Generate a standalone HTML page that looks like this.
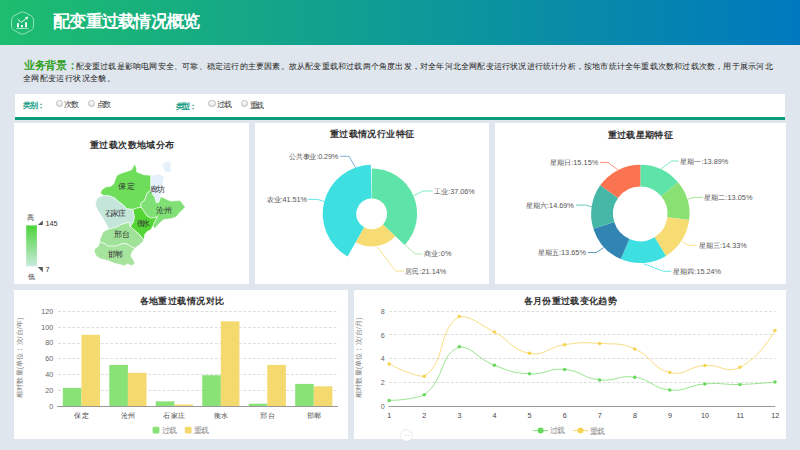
<!DOCTYPE html>
<html><head><meta charset="utf-8">
<style>
*{margin:0;padding:0;box-sizing:border-box}
html,body{width:800px;height:450px;overflow:hidden}
body{background:#e0e6ed;font-family:"Liberation Sans",sans-serif;position:relative;color:#333}
.abs{position:absolute;white-space:nowrap}
#hdr{left:0;top:0;width:800px;height:45px;background:linear-gradient(90deg,#1dbd6e 0%,#0078be 100%)}
#title{left:52.5px;top:11px;font-size:16.9px;font-weight:bold;color:#fff;line-height:20px}
#bgl{font-size:10.5px;line-height:13px;color:#3aa51f;font-weight:bold}
.bgt{font-size:8.4px;line-height:12px;color:#333}
#bar{left:15px;top:94px;width:770px;height:26px;background:#fff;border-bottom:3px solid #0a9e7e}
.flab{font-size:8.2px;font-weight:bold;color:#1d9d88;top:100.5px;line-height:10px}
.radio{width:7.2px;height:7.2px;border-radius:50%;border:1px solid #b8b8b8;background:linear-gradient(#fff,#e4e4e4);top:100px}
.rtx{font-size:7.3px;color:#444;top:100.8px;line-height:9px}
.pnl{background:#fff}
</style></head><body>
<div id="hdr" class="abs"></div>
<svg class="abs" style="left:0;top:0" width="45" height="45" viewBox="0 0 45 45">
 <path d="M20.13 12.55Q22.55 11.25 24.97 12.55L31.12 15.85Q33.54 17.15 33.54 19.75L33.54 26.35Q33.54 28.95 31.12 30.25L24.97 33.55Q22.55 34.85 20.13 33.55L13.98 30.25Q11.56 28.95 11.56 26.35L11.56 19.75Q11.56 17.15 13.98 15.85Z" fill="none" stroke="#d8f5e6" stroke-width="0.75" opacity="0.85"/>
 <rect x="17" y="23.1" width="1.9" height="4.2" fill="#fff"/>
 <rect x="21" y="25" width="1.9" height="2.3" fill="#fff"/>
 <rect x="25.1" y="22.3" width="1.9" height="5" fill="#fff"/>
 <rect x="16.2" y="28.2" width="12.3" height="0.6" fill="#fff"/>
 <path d="M17.8 19.3 L21.3 22.4 L26.6 18.3" fill="none" stroke="#fff" stroke-width="0.9"/>
 <path d="M28.1 16.6 L24.9 17.5 L27.3 19.8 Z" fill="#fff"/>
</svg>
<div id="bar" class="abs"></div>
<div class="abs radio" style="left:55.8px"></div>
<div class="abs radio" style="left:88.1px"></div>
<div class="abs radio" style="left:208.4px"></div>
<div class="abs radio" style="left:240.9px"></div>

<div class="abs pnl" style="left:14px;top:123px;width:235px;height:161px"></div>
<div class="abs pnl" style="left:255px;top:123px;width:234px;height:161px"></div>
<div class="abs pnl" style="left:495px;top:123px;width:291px;height:161px"></div>
<div class="abs pnl" style="left:14px;top:290px;width:334px;height:149px"></div>
<div class="abs pnl" style="left:354px;top:290px;width:432px;height:149px"></div>

<svg class="abs" style="left:0;top:0" width="800" height="450" viewBox="0 0 800 450" font-family="Liberation Sans, sans-serif">
<!-- MAP -->
<path d="M134.6 164.3L136.3 167.5L136.8 172L143.6 174.7L150.9 175.3L150.9 190.6L147.2 193L144.4 200.6L140.6 203.3L141.1 207.2L136.1 208.3L132.8 209.4L126.7 208.9L123.6 205.2L119.3 202.2L114.4 197.9L109.6 196L103.4 195.5L100.4 193L101.6 190L105.9 186.9L110.8 186.3L113.8 183.8L115 180.2L116.9 175.3L122.4 172.8L126.7 171.6L131.6 169.8Z" fill="#6ede5a" stroke="#fff" stroke-width="0.6" stroke-linejoin="round"/>
<path d="M150.9 175.3L155 175L159.5 174L164.3 177L162.5 184L161.3 190.6L160.7 196.7L158.8 202.2L156.4 202.8L154.6 196.7L153.3 195.5L150.9 190.6Z" fill="#e6f0fa" stroke="#fff" stroke-width="0.6" stroke-linejoin="round"/>
<path d="M162.5 163L167 161.5L170.5 161L171 166L171 172L166 172.5L163 168Z" fill="#e6f0fa" stroke="#fff" stroke-width="0.6" stroke-linejoin="round"/>
<path d="M147.2 193L150.9 190.6L153.3 195.5L154.6 196.7L156.4 202.8L158.8 202.2L160.7 196.7L162.6 197.4L170.6 201.1L180.3 200.5L185.2 207.2L179.1 213.3L176.1 217L170.6 218.8L163.8 219.4L159.6 223.1L154.7 228.6L152.8 226.1L155 221.1L157.2 216.7L151.7 218.3L147.2 216.1L143.3 210.6L141.1 207.2L140.6 203.3L144.4 200.6Z" fill="#80e076" stroke="#fff" stroke-width="0.6" stroke-linejoin="round"/>
<path d="M132.8 209.4L136.1 208.3L141.1 207.2L143.3 210.6L147.2 216.1L151.7 218.3L157.2 216.7L155 221.1L152.8 226.1L150.6 230L147.8 231.1L145 233.9L143.8 240L139.4 234.4L136.1 231.7L131.1 227.2L130 226.7L132.8 222.8L134.4 217.2Z" fill="#55d637" stroke="#fff" stroke-width="0.6" stroke-linejoin="round"/>
<path d="M96.7 199L99.5 197L103.4 195.5L109.6 196L114.4 197.9L119.3 202.2L123.6 205.2L126.7 208.9L132.8 209.4L134.4 217.2L132.8 222.8L130 226.7L129.3 222.3L122 224.3L116.7 227L108.7 229L106 223.7L102.7 217.7L98 211L95.3 205Z" fill="#c4e6da" stroke="#fff" stroke-width="0.6" stroke-linejoin="round"/>
<path d="M108.7 229L116.7 227L122 224.3L129.3 222.3L130 226.7L131.1 227.2L136.1 231.7L139.4 234.4L143.8 240L140.7 243.9L134.9 248.3L130.9 246.6L128.2 244.3L122.9 243.4L115.8 246.1L107.8 246.1L104.2 243.4L99.8 242.1L100 239L103.3 231.7Z" fill="#a0e298" stroke="#fff" stroke-width="0.6" stroke-linejoin="round"/>
<path d="M99.8 242.1L104.2 243.4L107.8 246.1L115.8 246.1L122.9 243.4L128.2 244.3L130.9 246.6L134.9 248.3L131.8 252.3L130.9 256.3L134 260.8L134.9 263.4L131.8 265.7L127.3 263.9L124.7 265.7L114.9 263.4L106.9 260.3L99.8 258.6L96.2 255.9L94.4 251.9L94.4 249.2L98.4 246.1Z" fill="#a6e49e" stroke="#fff" stroke-width="0.6" stroke-linejoin="round"/>
<defs><linearGradient id="vm" x1="0" y1="0" x2="0" y2="1"><stop offset="0" stop-color="#4cd43a"/><stop offset="1" stop-color="#c8eadc"/></linearGradient></defs>
<rect x="26.2" y="225.4" width="10.7" height="40.9" fill="url(#vm)"/>
<path d="M42.8 220.6 L42.8 224.9 L37.8 224.9 Z" fill="#555"/>
<path d="M37.8 266.9 L42.8 266.9 L42.8 272.2 Z" fill="#555"/>
<!-- ROSE -->
<path d="M371.7 168.39A45.41 45.41 0 0 1 404.68 245.01L382.96 224.45A15.5 15.5 0 0 0 371.7 198.3Z" fill="#5ee3a9"/>
<path d="M395.35 236.18A32.56 32.56 0 0 1 355.66 242.13L364.06 227.29A15.5 15.5 0 0 0 382.96 224.45Z" fill="#f6dc72"/>
<path d="M347.56 256.44A49 49 0 0 1 370.81 164.81L371.42 198.3A15.5 15.5 0 0 0 364.06 227.29Z" fill="#3ddfe0"/>
<path d="M371.41 198.07A15.73 15.73 0 0 1 371.7 198.07L371.7 198.3A15.5 15.5 0 0 0 371.42 198.3Z" fill="#5a9ccc"/>
<g fill="none" stroke-width="0.8">
 <path d="M414 195.5 L423 191 L432.5 191" stroke="#5ee3a9"/>
 <path d="M404.4 244.4 L415 253.9 L422.8 253.9" stroke="#9fe89a"/>
 <path d="M377.2 246.7 L395.6 271.1 L403.9 271.1" stroke="#f6dc72"/>
 <path d="M323.9 201.4 L317.7 199.4 L308.1 199.4" stroke="#3ddfe0"/>
 <path d="M355.7 167.7 L349 156.3 L340.3 156.3" stroke="#5a9ccc"/>
</g>
<!-- DONUT -->
<path d="M640.3 164.7A49.2 49.2 0 0 1 677.99 182.28L661.21 196.35A27.3 27.3 0 0 0 640.3 186.6Z" fill="#5ee3a9"/>
<path d="M677.99 182.28A49.2 49.2 0 0 1 689.13 219.88L667.4 217.22A27.3 27.3 0 0 0 661.21 196.35Z" fill="#8ae173"/>
<path d="M689.13 219.88A49.2 49.2 0 0 1 665.95 255.88L654.53 237.19A27.3 27.3 0 0 0 667.4 217.22Z" fill="#f6dc72"/>
<path d="M665.95 255.88A49.2 49.2 0 0 1 620.73 259.04L629.44 238.95A27.3 27.3 0 0 0 654.53 237.19Z" fill="#3ddfe0"/>
<path d="M620.73 259.04A49.2 49.2 0 0 1 593.36 228.63L614.25 222.07A27.3 27.3 0 0 0 629.44 238.95Z" fill="#3285b3"/>
<path d="M593.36 228.63A49.2 49.2 0 0 1 600.23 185.36L618.06 198.06A27.3 27.3 0 0 0 614.25 222.07Z" fill="#45b7a6"/>
<path d="M600.23 185.36A49.2 49.2 0 0 1 640.3 164.7L640.3 186.6A27.3 27.3 0 0 0 618.06 198.06Z" fill="#fb7452"/>
<g fill="none" stroke-width="0.8">
 <path d="M660.9 169 L671.6 161 L678.7 161" stroke="#5ee3a9"/>
 <path d="M688.4 199.2 L693.8 197.4 L702.7 197.4" stroke="#8ae173"/>
 <path d="M682.2 241.7 L688.9 245.4 L696.7 245.4" stroke="#f6dc72"/>
 <path d="M643.8 263.8 L663.8 271.3 L671.3 271.3" stroke="#3ddfe0"/>
 <path d="M603.8 247.5 L596.3 252.5 L588 252.5" stroke="#3285b3"/>
 <path d="M592.1 206.9 L585.8 205.1 L576 205.1" stroke="#45b7a6"/>
 <path d="M617.9 169.9 L608.1 162.4 L600.1 162.4" stroke="#fb7452"/>
</g>
<!-- BAR -->
<line x1="58.2" y1="390.5" x2="337.0" y2="390.5" stroke="#dcdcdc" stroke-width="1" stroke-dasharray="2.7 2.05"/>
<line x1="58.2" y1="374.5" x2="337.0" y2="374.5" stroke="#dcdcdc" stroke-width="1" stroke-dasharray="2.7 2.05"/>
<line x1="58.2" y1="358.5" x2="337.0" y2="358.5" stroke="#dcdcdc" stroke-width="1" stroke-dasharray="2.7 2.05"/>
<line x1="58.2" y1="343.5" x2="337.0" y2="343.5" stroke="#dcdcdc" stroke-width="1" stroke-dasharray="2.7 2.05"/>
<line x1="58.2" y1="327.5" x2="337.0" y2="327.5" stroke="#dcdcdc" stroke-width="1" stroke-dasharray="2.7 2.05"/>
<line x1="58.2" y1="311.5" x2="337.0" y2="311.5" stroke="#dcdcdc" stroke-width="1" stroke-dasharray="2.7 2.05"/>
<rect x="62.85" y="387.89" width="18.59" height="18.21" fill="#89e276"/>
<rect x="81.43" y="334.85" width="18.59" height="71.25" fill="#f4d96e"/>
<rect x="109.31" y="364.93" width="18.59" height="41.17" fill="#89e276"/>
<rect x="127.9" y="372.85" width="18.59" height="33.25" fill="#f4d96e"/>
<rect x="155.78" y="401.35" width="18.59" height="4.75" fill="#89e276"/>
<rect x="174.37" y="404.52" width="18.59" height="1.58" fill="#f4d96e"/>
<rect x="202.25" y="375.22" width="18.59" height="30.88" fill="#89e276"/>
<rect x="220.83" y="321.39" width="18.59" height="84.71" fill="#f4d96e"/>
<rect x="248.71" y="403.72" width="18.59" height="2.38" fill="#89e276"/>
<rect x="267.3" y="364.93" width="18.59" height="41.17" fill="#f4d96e"/>
<rect x="295.18" y="383.93" width="18.59" height="22.17" fill="#89e276"/>
<rect x="313.77" y="386.31" width="18.59" height="19.79" fill="#f4d96e"/>
<line x1="57.2" y1="406.5" x2="338.0" y2="406.5" stroke="#999" stroke-width="1"/>
<g font-size="7.2" fill="#666" text-anchor="end">
<text x="53.2" y="408.7">0</text>
<text x="53.2" y="392.87">20</text>
<text x="53.2" y="377.03">40</text>
<text x="53.2" y="361.2">60</text>
<text x="53.2" y="345.36">80</text>
<text x="53.2" y="329.53">100</text>
<text x="53.2" y="313.7">120</text>
</g><g font-size="7.2" fill="#444" text-anchor="middle">
<text x="81.43" y="418.2" textLength="14.5" lengthAdjust="spacing">保定</text>
<text x="127.9" y="418.2" textLength="14.5" lengthAdjust="spacing">沧州</text>
<text x="174.37" y="418.2" textLength="22.1" lengthAdjust="spacing">石家庄</text>
<text x="220.83" y="418.2" textLength="14.5" lengthAdjust="spacing">衡水</text>
<text x="267.3" y="418.2" textLength="14.5" lengthAdjust="spacing">邢台</text>
<text x="313.77" y="418.2" textLength="14.5" lengthAdjust="spacing">邯郸</text>
</g>
<text transform="translate(22,357.8) rotate(-90)" font-size="6.6" fill="#777" text-anchor="middle" textLength="80.5" lengthAdjust="spacing">相对数量(单位：次/台/年)</text>
<rect x="152.6" y="426.7" width="6.8" height="6.8" rx="1.5" fill="#89e276"/>
<rect x="184.8" y="426.7" width="6.8" height="6.8" rx="1.5" fill="#f4d96e"/>
<!-- LINE -->
<line x1="389.2" y1="382.5" x2="775.3" y2="382.5" stroke="#dcdcdc" stroke-width="1" stroke-dasharray="2.7 2.05"/>
<line x1="389.2" y1="358.5" x2="775.3" y2="358.5" stroke="#dcdcdc" stroke-width="1" stroke-dasharray="2.7 2.05"/>
<line x1="389.2" y1="334.5" x2="775.3" y2="334.5" stroke="#dcdcdc" stroke-width="1" stroke-dasharray="2.7 2.05"/>
<line x1="389.2" y1="311.5" x2="775.3" y2="311.5" stroke="#dcdcdc" stroke-width="1" stroke-dasharray="2.7 2.05"/>
<line x1="388.5" y1="406.5" x2="775.3" y2="406.5" stroke="#999" stroke-width="1"/>
<g font-size="7.2" fill="#666" text-anchor="end">
<text x="384.7" y="408.7">0</text>
<text x="384.7" y="385">2</text>
<text x="384.7" y="361.3">4</text>
<text x="384.7" y="337.6">6</text>
<text x="384.7" y="313.9">8</text>
</g><g font-size="7.2" fill="#444" text-anchor="middle">
<text x="389.2" y="417.6">1</text>
<text x="424.3" y="417.6">2</text>
<text x="459.4" y="417.6">3</text>
<text x="494.5" y="417.6">4</text>
<text x="529.6" y="417.6">5</text>
<text x="564.7" y="417.6">6</text>
<text x="599.8" y="417.6">7</text>
<text x="634.9" y="417.6">8</text>
<text x="670" y="417.6">9</text>
<text x="705.1" y="417.6">10</text>
<text x="740.2" y="417.6">11</text>
<text x="775.3" y="417.6">12</text>
</g>
<text transform="translate(361.2,357.8) rotate(-90)" font-size="6.6" fill="#777" text-anchor="middle" textLength="80.5" lengthAdjust="spacing">相对数量(单位：次/台/月)</text>
<path d="M389.2 363.91C389.2 363.91 412.04 376.36 424.27 376.36C447.11 360.89 436.76 330.67 459.34 316.4C471.83 316.4 477.45 323.12 494.41 332.04C512.52 341.55 510.83 349.88 529.48 353.25C545.9 356.22 546.77 347.21 564.55 344.72C581.84 342.29 582.19 342.35 599.62 343.41C617.26 344.49 618.66 342.35 634.69 348.98C653.73 356.87 650.78 367.99 669.76 372.45C685.85 376.22 687.14 366.74 704.83 365.45C722.21 364.19 725.56 374.47 739.9 367.35C760.63 357.05 774.97 330.62 774.97 330.62" fill="none" stroke="#f6d66a" stroke-width="0.85"/>
<path d="M389.2 400.41C389.2 400.41 411.15 400.41 424.27 394.84C446.22 378.08 438.29 355.74 459.34 346.85C473.36 346.85 476.07 358.18 494.41 365.22C511.14 371.63 511.76 372.67 529.48 373.75C546.83 374.8 547.32 367.97 564.55 369.48C582.39 371.05 581.74 377.95 599.62 379.91C616.81 381.8 617.68 374.74 634.69 377.19C652.75 379.78 651.81 388.25 669.76 389.98C686.88 391.63 687.17 385.34 704.83 383.94C722.24 382.56 722.38 384.89 739.9 384.41C757.45 383.94 774.97 382.04 774.97 382.04" fill="none" stroke="#86e07a" stroke-width="0.85"/>
<circle cx="389.2" cy="363.91" r="1.75" fill="#f5d452"/>
<circle cx="424.27" cy="376.36" r="1.75" fill="#f5d452"/>
<circle cx="459.34" cy="316.4" r="1.75" fill="#f5d452"/>
<circle cx="494.41" cy="332.04" r="1.75" fill="#f5d452"/>
<circle cx="529.48" cy="353.25" r="1.75" fill="#f5d452"/>
<circle cx="564.55" cy="344.72" r="1.75" fill="#f5d452"/>
<circle cx="599.62" cy="343.41" r="1.75" fill="#f5d452"/>
<circle cx="634.69" cy="348.98" r="1.75" fill="#f5d452"/>
<circle cx="669.76" cy="372.45" r="1.75" fill="#f5d452"/>
<circle cx="704.83" cy="365.45" r="1.75" fill="#f5d452"/>
<circle cx="739.9" cy="367.35" r="1.75" fill="#f5d452"/>
<circle cx="774.97" cy="330.62" r="1.75" fill="#f5d452"/>
<circle cx="389.2" cy="400.41" r="1.75" fill="#6ad85e"/>
<circle cx="424.27" cy="394.84" r="1.75" fill="#6ad85e"/>
<circle cx="459.34" cy="346.85" r="1.75" fill="#6ad85e"/>
<circle cx="494.41" cy="365.22" r="1.75" fill="#6ad85e"/>
<circle cx="529.48" cy="373.75" r="1.75" fill="#6ad85e"/>
<circle cx="564.55" cy="369.48" r="1.75" fill="#6ad85e"/>
<circle cx="599.62" cy="379.91" r="1.75" fill="#6ad85e"/>
<circle cx="634.69" cy="377.19" r="1.75" fill="#6ad85e"/>
<circle cx="669.76" cy="389.98" r="1.75" fill="#6ad85e"/>
<circle cx="704.83" cy="383.94" r="1.75" fill="#6ad85e"/>
<circle cx="739.9" cy="384.41" r="1.75" fill="#6ad85e"/>
<circle cx="774.97" cy="382.04" r="1.75" fill="#6ad85e"/>
<line x1="533.1" y1="430.6" x2="548.2" y2="430.6" stroke="#86e07a" stroke-width="1"/><circle cx="540.6" cy="430.6" r="3" fill="#6ad85e"/>
<line x1="573" y1="430.6" x2="588.1" y2="430.6" stroke="#f6d66a" stroke-width="1"/><circle cx="580.5" cy="430.6" r="3" fill="#f5d452"/>
<circle cx="406.5" cy="435.5" r="5.8" fill="#fff" stroke="#e4e4e4" stroke-width="0.8"/>
<g fill="#ccc"><circle cx="404.3" cy="435.5" r="0.5"/><circle cx="406.5" cy="435.5" r="0.5"/><circle cx="408.7" cy="435.5" r="0.5"/></g>
<!-- TEXT -->
<text x="52.95" y="27.40" font-size="17" font-weight="bold" fill="#fff" textLength="147.47" lengthAdjust="spacing">配变重过载情况概览</text>
<text x="23.83" y="69.15" font-size="10.5" font-weight="bold" fill="#2f9f1c" textLength="54.05" lengthAdjust="spacing">业务背景：</text>
<text x="75.53" y="68.86" font-size="8.4" fill="#222" textLength="696.98" lengthAdjust="spacing">配变重过载是影响电网安全、可靠、稳定运行的主要因素。故从配变重载和过载两个角度出发，对全年河北全网配变运行状况进行统计分析，按地市统计全年重载次数和过载次数，用于展示河北</text>
<text x="22.94" y="81.42" font-size="8.4" fill="#222" textLength="91.80" lengthAdjust="spacing">全网配变运行状况全貌。</text>
<text x="23.11" y="108.34" font-size="8.2" font-weight="bold" fill="#139b84" textLength="21.54" lengthAdjust="spacing">类别：</text>
<text x="64.34" y="107.21" font-size="7.5" fill="#333" textLength="14.41" lengthAdjust="spacing">次数</text>
<text x="97.12" y="107.45" font-size="7.5" fill="#333" textLength="14.25" lengthAdjust="spacing">点数</text>
<text x="176.03" y="108.66" font-size="8.2" font-weight="bold" fill="#139b84" textLength="20.90" lengthAdjust="spacing">类型：</text>
<text x="217.43" y="107.45" font-size="7.5" fill="#333" textLength="14.65" lengthAdjust="spacing">过载</text>
<text x="249.98" y="108.13" font-size="7.5" fill="#333" textLength="14.23" lengthAdjust="spacing">重载</text>
<text x="90.07" y="148.04" font-size="9.4" font-weight="bold" fill="#333" textLength="83.98" lengthAdjust="spacing">重过载次数地域分布</text>
<text x="330.07" y="136.56" font-size="9.4" font-weight="bold" fill="#333" textLength="83.82" lengthAdjust="spacing">重过载情况行业特征</text>
<text x="607.83" y="137.86" font-size="9.4" font-weight="bold" fill="#333" textLength="64.93" lengthAdjust="spacing">重过载星期特征</text>
<text x="139.53" y="304.31" font-size="9.4" font-weight="bold" fill="#333" textLength="84.69" lengthAdjust="spacing">各地重过载情况对比</text>
<text x="523.83" y="304.36" font-size="9.4" font-weight="bold" fill="#333" textLength="92.72" lengthAdjust="spacing">各月份重过载变化趋势</text>
<text x="117.96" y="188.94" font-size="7.6" fill="#333" textLength="17.38" lengthAdjust="spacing">保定</text>
<text x="150.00" y="191.84" font-size="7.6" fill="#333" textLength="15.14" lengthAdjust="spacing">廊坊</text>
<text x="104.64" y="215.52" font-size="7.6" fill="#333" textLength="21.08" lengthAdjust="spacing">石家庄</text>
<text x="155.62" y="213.14" font-size="7.6" fill="#333" textLength="16.58" lengthAdjust="spacing">沧州</text>
<text x="136.52" y="225.50" font-size="7.6" fill="#333" textLength="13.20" lengthAdjust="spacing">衡水</text>
<text x="114.02" y="236.84" font-size="7.6" fill="#333" textLength="16.26" lengthAdjust="spacing">邢台</text>
<text x="107.92" y="257.04" font-size="7.6" fill="#333" textLength="15.46" lengthAdjust="spacing">邯郸</text>
<text x="26.84" y="220.23" font-size="7.3" fill="#333">高</text>
<text x="45.53" y="225.87" font-size="7.3" fill="#333" textLength="12.13" lengthAdjust="spacing">145</text>
<text x="45.43" y="271.87" font-size="7.3" fill="#333">7</text>
<text x="27.64" y="278.97" font-size="7.3" fill="#333">低</text>
<text x="434.13" y="193.77" font-size="7.3" fill="#555" textLength="40.73" lengthAdjust="spacing">工业:37.06%</text>
<text x="424.19" y="256.27" font-size="7.3" fill="#555" textLength="27.33" lengthAdjust="spacing">商业:0%</text>
<text x="405.44" y="274.27" font-size="7.3" fill="#555" textLength="40.83" lengthAdjust="spacing">居民:21.14%</text>
<text x="266.76" y="202.49" font-size="7.3" fill="#555" textLength="40.15" lengthAdjust="spacing">农业:41.51%</text>
<text x="288.89" y="159.27" font-size="7.3" fill="#555" textLength="49.41" lengthAdjust="spacing">公共事业:0.29%</text>
<text x="680.37" y="164.11" font-size="7.3" fill="#555" textLength="47.92" lengthAdjust="spacing">星期一:13.89%</text>
<text x="704.21" y="200.49" font-size="7.3" fill="#555" textLength="48.21" lengthAdjust="spacing">星期二:13.05%</text>
<text x="698.92" y="247.75" font-size="7.3" fill="#555" textLength="47.86" lengthAdjust="spacing">星期三:14.33%</text>
<text x="673.43" y="274.27" font-size="7.3" fill="#555" textLength="47.63" lengthAdjust="spacing">星期四:15.24%</text>
<text x="537.79" y="254.93" font-size="7.3" fill="#555" textLength="48.14" lengthAdjust="spacing">星期五:13.65%</text>
<text x="526.01" y="207.53" font-size="7.3" fill="#555" textLength="47.86" lengthAdjust="spacing">星期六:14.69%</text>
<text x="550.01" y="165.07" font-size="7.3" fill="#555" textLength="48.24" lengthAdjust="spacing">星期日:15.15%</text>
<text x="162.12" y="432.95" font-size="7.5" fill="#888" textLength="15.15" lengthAdjust="spacing">过载</text>
<text x="194.43" y="432.95" font-size="7.5" fill="#888" textLength="14.55" lengthAdjust="spacing">重载</text>
<text x="549.83" y="432.91" font-size="7.5" fill="#888" textLength="15.47" lengthAdjust="spacing">过载</text>
<text x="590.26" y="433.87" font-size="7.5" fill="#888" textLength="14.45" lengthAdjust="spacing">重载</text>
</svg>
</body></html>
